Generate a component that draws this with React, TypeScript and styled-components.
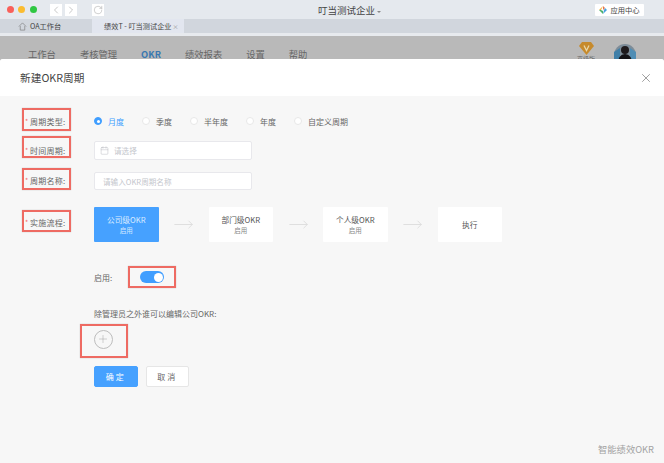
import React from "react";
import styled, { createGlobalStyle } from "styled-components";
import { ChevronLeft, ChevronRight, RotateCw, Calendar, X, Plus, MoveRight } from "lucide-react";

const GlobalStyle = createGlobalStyle`
  html, body {
    margin: 0;
    padding: 0;
    background: #f7f7f7;
  }
  * {
    box-sizing: border-box;
  }
`;

const Page = styled.div`
  position: relative;
  width: 664px;
  height: 463px;
  overflow: hidden;
  display: flex;
  flex-direction: column;
  font-family: "Noto Sans CJK SC", "Liberation Sans", sans-serif;
  color: #555;
`;

const TitleBar = styled.div`
  height: 19px;
  background: #e5e9ee;
  display: flex;
  align-items: center;
  padding: 0 20px 0 6.5px;
`;

const Lights = styled.div`
  display: flex;
  gap: 4.5px;
  width: 43.5px;
`;

const Light = styled.span<{ $color: string }>`
  width: 7px;
  height: 7px;
  border-radius: 50%;
  background: ${(p) => p.$color};
`;

const NavButton = styled.div<{ $gap?: number }>`
  width: 12px;
  height: 12px;
  background: #fff;
  margin-right: ${(p) => p.$gap ?? 0}px;
  display: flex;
  align-items: center;
  justify-content: center;
  color: #999;
`;

const WindowTitle = styled.div`
  flex: 1;
  text-align: center;
  font-size: 9.5px;
  color: #444;
`;

const Caret = styled.span`
  display: inline-block;
  margin-left: 2px;
  vertical-align: 1px;
  border-left: 2px solid transparent;
  border-right: 2px solid transparent;
  border-top: 2px solid #888;
`;

const AppCenter = styled.div`
  width: 49px;
  height: 12px;
  background: #fff;
  border-radius: 1px;
  display: flex;
  align-items: center;
  justify-content: center;
  gap: 3px;
  font-size: 7.3px;
  color: #444;
`;

const TabBar = styled.div`
  height: 14px;
  background: #d1d6dd;
  display: flex;
  padding-left: 14px;
`;

const Tab = styled.div<{ $active?: boolean; $width: number }>`
  width: ${(p) => p.$width}px;
  height: 14px;
  display: flex;
  align-items: center;
  gap: 3px;
  padding-left: ${(p) => (p.$active ? 12 : 4)}px;
  font-size: 7.2px;
  color: #444;
  white-space: nowrap;
  background: ${(p) => (p.$active ? "#e2e6ef" : "transparent")};
`;

const TabClose = styled.span`
  font-size: 6px;
  color: #999;
  margin-left: -2px;
`;

const Strip = styled.div`
  height: 3px;
  background: #e7eaee;
`;

const NavBar = styled.div`
  flex: 1;
  background: #b9b9b9;
  display: flex;
  align-items: flex-start;
  padding: 13px 0 0 28px;
  gap: 24px;
  font-size: 9.3px;
  color: #666;
`;

const NavItem = styled.div<{ $active?: boolean }>`
  line-height: 10px;
  white-space: nowrap;
  font-weight: ${(p) => (p.$active ? 700 : 400)};
  color: ${(p) => (p.$active ? "#3a78b0" : "#666")};
`;

const NavRight = styled.div`
  margin-left: auto;
  display: flex;
  gap: 16px;
  margin-top: -7px;
  padding-right: 28px;
`;

const VipBadge = styled.div`
  width: 24px;
  display: flex;
  flex-direction: column;
  align-items: center;
  font-size: 6px;
  line-height: 7px;
  color: #666;
  white-space: nowrap;
`;

const Avatar = styled.svg`
  width: 22px;
  height: 22px;
  margin-top: 2px;
`;

/* the dialog lies over the page, hiding the lower part of the nav */
const Modal = styled.div`
  position: absolute;
  top: 59px;
  left: 0;
  right: 0;
  bottom: 0;
  display: flex;
  flex-direction: column;
  border-radius: 3px 3px 0 0;
  overflow: hidden;
  background: #f7f7f7;
`;

const ModalHeader = styled.div`
  height: 37px;
  flex: none;
  background: #fff;
  display: flex;
  align-items: center;
  justify-content: space-between;
  padding: 0 11px 0 20px;
  font-size: 10.7px;
  color: #444;
`;

const CloseButton = styled.div`
  display: flex;
  color: #777;
`;

const ModalBody = styled.div`
  flex: 1;
  padding: 12px 0 0 22px;
  display: flex;
  flex-direction: column;
`;

const FormRow = styled.div<{ $mt?: number }>`
  display: flex;
  align-items: center;
  margin-top: ${(p) => p.$mt ?? 0}px;
`;

const MarkedLabel = styled.div<{ $h: number; $drop: number }>`
  width: 49px;
  height: ${(p) => p.$h}px;
  flex: none;
  border: 2px solid #ee6b63;
  box-shadow: 0 0 1px rgba(0, 0, 0, 0.25);
  display: flex;
  align-items: center;
  padding-left: 1px;
  padding-top: ${(p) => p.$drop * 2}px;
  font-size: 8px;
  letter-spacing: 0.25px;
  white-space: nowrap;
  color: #666;
`;

const Star = styled.span`
  color: #f56c6c;
  font-size: 7px;
  width: 5px;
  flex: none;
`;

const Control = styled.div<{ $drop: number }>`
  margin: ${(p) => p.$drop}px 0 ${(p) => -p.$drop}px 23px;
  display: flex;
  align-items: center;
`;

const RadioItem = styled.label<{ $width: number; $checked?: boolean }>`
  width: ${(p) => p.$width}px;
  display: flex;
  align-items: center;
  gap: 6px;
  font-size: 8px;
  white-space: nowrap;
  color: ${(p) => (p.$checked ? "#409eff" : "#666")};
`;

const RadioDot = styled.span<{ $checked?: boolean }>`
  width: 8px;
  height: 8px;
  border-radius: 50%;
  flex: none;
  background: ${(p) => (p.$checked ? "#409eff" : "#fff")};
  border: 1px solid ${(p) => (p.$checked ? "#409eff" : "#e8e8e8")};
  display: flex;
  align-items: center;
  justify-content: center;
  &::after {
    content: "";
    width: 3px;
    height: 3px;
    border-radius: 50%;
    background: #fff;
  }
`;

const TextBox = styled.div<{ $pad: number; $h: number }>`
  width: 158px;
  height: ${(p) => p.$h}px;
  background: #fff;
  border: 1px solid #e8e8ec;
  border-radius: 2px;
  display: flex;
  align-items: center;
  gap: 5px;
  padding-left: ${(p) => p.$pad}px;
  font-size: 7.6px;
  color: #c4c6cc;
`;

const BoxIcon = styled.span`
  display: flex;
  color: #b4b6bc;
`;

const Flow = styled.div`
  display: flex;
  align-items: center;
  margin: -3px 0 -10px 23px;
`;

const FlowStep = styled.div<{ $active?: boolean }>`
  width: 64.5px;
  height: 35px;
  border-radius: 1px;
  display: flex;
  flex-direction: column;
  align-items: center;
  justify-content: center;
  font-size: 7.7px;
  line-height: 10px;
  background: ${(p) => (p.$active ? "#46a1ff" : "#fff")};
  color: ${(p) => (p.$active ? "#dcecff" : "#555")};
`;

const FlowSub = styled.div<{ $active?: boolean }>`
  font-size: 6.5px;
  color: ${(p) => (p.$active ? "#d5e9ff" : "#888")};
`;

const FlowArrow = styled.div`
  width: 50px;
  display: flex;
  justify-content: center;
  color: #dcdcdc;
`;

const Section = styled.div`
  margin-left: 72px;
  display: flex;
  flex-direction: column;
`;

const ToggleRow = styled.div`
  margin-top: 34px;
  display: flex;
  align-items: center;
  font-size: 8px;
  color: #666;
`;

const ToggleLabel = styled.div`
  width: 34px;
`;

const MarkedBox = styled.div<{ $w: number; $h: number }>`
  width: ${(p) => p.$w}px;
  height: ${(p) => p.$h}px;
  border: 2px solid #ee6b63;
  box-shadow: 0 0 1px rgba(0, 0, 0, 0.25);
  display: flex;
  align-items: center;
  justify-content: center;
`;

const Switch = styled.div`
  width: 24px;
  height: 12px;
  border-radius: 6px;
  background: #409eff;
  display: flex;
  justify-content: flex-end;
  align-items: center;
  padding-right: 1.5px;
  &::after {
    content: "";
    width: 9px;
    height: 9px;
    border-radius: 50%;
    background: #fff;
  }
`;

const EditorsLabel = styled.div`
  margin-top: 20px;
  font-size: 8px;
  line-height: 12px;
  color: #666;
`;

const PlusBox = styled(MarkedBox)`
  margin: 4px 0 0 -14px;
  padding: 0 2px 4px 0;
`;

const PlusCircle = styled.div`
  width: 19px;
  height: 19px;
  border-radius: 50%;
  border: 1px solid #bdbdbd;
  display: flex;
  align-items: center;
  justify-content: center;
  color: #a0a0a0;
`;

const Actions = styled.div`
  margin-top: 8px;
  display: flex;
  gap: 8px;
`;

const ActionButton = styled.button<{ $primary?: boolean }>`
  width: 43.5px;
  height: 21px;
  padding: 0;
  border-radius: 2px;
  font-family: inherit;
  font-size: 8px;
  letter-spacing: 2px;
  border: 1px solid ${(p) => (p.$primary ? "#46a1ff" : "#e6e6e6")};
  background: ${(p) => (p.$primary ? "#46a1ff" : "#fff")};
  color: ${(p) => (p.$primary ? "#fff" : "#666")};
`;

const Watermark = styled.div`
  position: absolute;
  right: 10px;
  bottom: 7px;
  font-size: 9.3px;
  line-height: 13px;
  color: #a2a2a2;
`;

const radios = [
  { label: "月度", width: 48, checked: true },
  { label: "季度", width: 48 },
  { label: "半年度", width: 56 },
  { label: "年度", width: 48 },
  { label: "自定义周期", width: 70 },
];

const steps = [
  { name: "公司级OKR", sub: "启用", active: true },
  { name: "部门级OKR", sub: "启用" },
  { name: "个人级OKR", sub: "启用" },
  { name: "执行" },
];

const menu = ["工作台", "考核管理", "OKR", "绩效报表", "设置", "帮助"];

export default function App() {
  return (
    <Page>
      <GlobalStyle />
      <TitleBar>
        <Lights>
          <Light $color="#f9605a" />
          <Light $color="#fbbc30" />
          <Light $color="#2fc742" />
        </Lights>
        <NavButton $gap={3}>
          <ChevronLeft size={14} strokeWidth={1.1} />
        </NavButton>
        <NavButton $gap={15}>
          <ChevronRight size={14} strokeWidth={1.1} />
        </NavButton>
        <NavButton>
          <RotateCw size={10} strokeWidth={1.1} />
        </NavButton>
        <WindowTitle>
          叮当测试企业
          <Caret />
        </WindowTitle>
        <AppCenter>
          <svg width="8" height="8" viewBox="0 0 8 8">
            <path d="M4 0 L6 2 L4 4 Z" fill="#e8734a" />
            <path d="M4 0 L2 2 L0 4 L2 4 Z" fill="#f2b13c" />
            <path d="M0 4 L4 8 L4 5 L2 4 Z" fill="#4db06a" />
            <path d="M8 4 L4 8 L5 4 L6 2 Z" fill="#46a0e0" />
          </svg>
          应用中心
        </AppCenter>
      </TitleBar>
      <TabBar>
        <Tab $width={78}>
          <svg width="9" height="9" viewBox="0 0 10 10" fill="none" stroke="#777" strokeWidth="0.7">
            <path d="M1 5 L5 1 L9 5 M2.5 4.5 V9 H7.5 V4.5" />
          </svg>
          OA工作台
        </Tab>
        <Tab $active $width={92}>
          绩效T - 叮当测试企业
          <TabClose>×</TabClose>
        </Tab>
      </TabBar>
      <Strip />
      <NavBar>
        {menu.map((m) => (
          <NavItem key={m} $active={m === "OKR"}>
            {m}
          </NavItem>
        ))}
        <NavRight>
          <VipBadge>
            <svg width="15" height="13" viewBox="0 0 15 13">
              <path d="M3 0 H12 L15 4 L7.5 13 L0 4 Z" fill="#c68a2c" />
              <path d="M5 3.5 L7.5 8.5 L10 3.5" fill="none" stroke="#e9d7a8" strokeWidth="1.3" />
            </svg>
            高级版
          </VipBadge>
          <Avatar viewBox="0 0 22 22">
            <circle cx="11" cy="11" r="11" fill="#7d8c98" />
            <path d="M0 8 L6 4 L6 16 L0 16 Z" fill="#3f7fa8" />
            <path d="M16 4 L22 8 L22 16 L16 16 Z" fill="#4f8db4" />
            <circle cx="11" cy="6" r="4" fill="#1f1a1c" />
            <path d="M3 22 Q4 10 11 10 Q18 10 19 22 Z" fill="#151316" />
          </Avatar>
        </NavRight>
      </NavBar>
      <Modal>
        <ModalHeader>
          新建OKR周期
          <CloseButton>
            <X size={14} strokeWidth={1.2} />
          </CloseButton>
        </ModalHeader>
        <ModalBody>
          <FormRow>
            <MarkedLabel $h={23} $drop={1.5}>
              <Star>*</Star>周期类型:
            </MarkedLabel>
            <Control $drop={1.5}>
              {radios.map((r) => (
                <RadioItem key={r.label} $width={r.width} $checked={r.checked}>
                  <RadioDot $checked={r.checked} />
                  {r.label}
                </RadioItem>
              ))}
            </Control>
          </FormRow>
          <FormRow $mt={5}>
            <MarkedLabel $h={22} $drop={3}>
              <Star>*</Star>时间周期:
            </MarkedLabel>
            <Control $drop={3.5}>
              <TextBox $pad={5} $h={19}>
                <BoxIcon>
                  <Calendar size={9} strokeWidth={1.2} />
                </BoxIcon>
                请选择
              </TextBox>
            </Control>
          </FormRow>
          <FormRow $mt={10}>
            <MarkedLabel $h={22} $drop={1}>
              <Star>*</Star>周期名称:
            </MarkedLabel>
            <Control $drop={2}>
              <TextBox $pad={8} $h={18}>请输入OKR周期名称</TextBox>
            </Control>
          </FormRow>
          <FormRow $mt={20}>
            <MarkedLabel $h={22} $drop={1}>
              <Star>*</Star>实施流程:
            </MarkedLabel>
            <Flow>
              {steps.map((s, i) => (
                <React.Fragment key={s.name}>
                  {i > 0 && (
                    <FlowArrow>
                      <MoveRight size={21} strokeWidth={1} />
                    </FlowArrow>
                  )}
                  <FlowStep $active={s.active}>
                    {s.name}
                    {s.sub && <FlowSub $active={s.active}>{s.sub}</FlowSub>}
                  </FlowStep>
                </React.Fragment>
              ))}
            </Flow>
          </FormRow>
          <Section>
            <ToggleRow>
              <ToggleLabel>启用:</ToggleLabel>
              <MarkedBox $w={48} $h={22}>
                <Switch />
              </MarkedBox>
            </ToggleRow>
            <EditorsLabel>除管理员之外谁可以编辑公司OKR:</EditorsLabel>
            <PlusBox $w={48} $h={34}>
              <PlusCircle>
                <Plus size={12} strokeWidth={1} />
              </PlusCircle>
            </PlusBox>
            <Actions>
              <ActionButton $primary>确定</ActionButton>
              <ActionButton>取消</ActionButton>
            </Actions>
          </Section>
        </ModalBody>
      </Modal>
      <Watermark>智能绩效OKR</Watermark>
    </Page>
  );
}
